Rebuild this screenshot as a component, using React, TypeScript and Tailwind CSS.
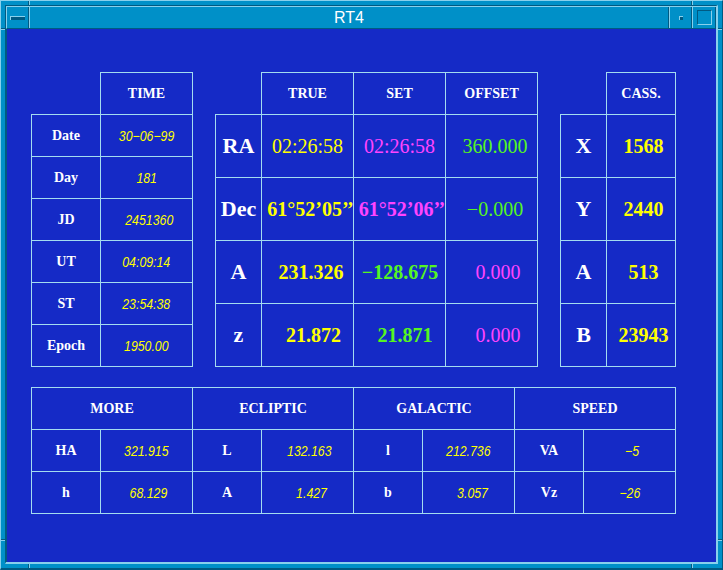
import React from "react";

const GRID = "border border-[#a4dcf0]";
const SERIF = "font-['Liberation_Serif',serif]";
const HDR = `${SERIF} font-bold text-[14px] text-white leading-none`;
const ITAL = "font-['Liberation_Sans',sans-serif] italic text-[14px] text-[#ffff00] leading-none";
const CENTER = "flex items-center justify-center whitespace-nowrap shrink-0";

const YEL = "text-[#ffff00]";
const MAG = "text-[#ff44ff]";
const GRN = "text-[#55f522]";

type V = { t: string; c: string; b?: boolean; s?: string };

const timeRows: [string, string, string][] = [
  ["Date", "30−06−99", ""],
  ["Day", "181", ""],
  ["JD", "2451360", "pl-[5px]"],
  ["UT", "04:09:14", ""],
  ["ST", "23:54:38", ""],
  ["Epoch", "1950.00", ""],
];

const posRows: [string, V[]][] = [
  [
    "RA",
    [
      { t: "02:26:58", c: YEL },
      { t: "02:26:58", c: MAG },
      { t: "360.000", c: GRN, s: "pl-[7px]" },
    ],
  ],
  [
    "Dec",
    [
      { t: "61°52’05’’", c: YEL, b: true, s: "pl-[6px]" },
      { t: "61°52’06’’", c: MAG, b: true, s: "pl-[5px]" },
      { t: "−0.000", c: GRN, s: "pl-[7px]" },
    ],
  ],
  [
    "A",
    [
      { t: "231.326", c: YEL, b: true, s: "pl-[7px]" },
      { t: "−128.675", c: GRN, b: true, s: "pl-[1px]" },
      { t: "0.000", c: MAG, s: "pl-[13px]" },
    ],
  ],
  [
    "z",
    [
      { t: "21.872", c: YEL, b: true, s: "pl-[12px]" },
      { t: "21.871", c: GRN, b: true, s: "pl-[11px]" },
      { t: "0.000", c: MAG, s: "pl-[13px]" },
    ],
  ],
];

const cassRows: [string, string][] = [
  ["X", "1568"],
  ["Y", "2440"],
  ["A", "513"],
  ["B", "23943"],
];

const moreHeaders = ["MORE", "ECLIPTIC", "GALACTIC", "SPEED"];
const moreRows: [string, string, string][][] = [
  [
    ["HA", "321.915", ""],
    ["L", "132.163", "pl-[3px]"],
    ["l", "212.736", ""],
    ["VA", "−5", "pl-[5px]"],
  ],
  [
    ["h", "68.129", "pl-[4px]"],
    ["A", "1.427", "pl-[9px]"],
    ["b", "3.057", "pl-[9px]"],
    ["Vz", "−26", ""],
  ],
];

function Ital({ t }: { t: string }) {
  return <span className="inline-block scale-x-[0.88]">{t}</span>;
}

function TimeTable() {
  return (
    <div className="flex flex-col">
      <div className="flex">
        <div className="w-[69px] shrink-0" />
        <div className={`w-[93px] h-[43px] ${GRID} ${CENTER} ${HDR}`}>TIME</div>
      </div>
      {timeRows.map(([l, v, s]) => (
        <div key={l} className="flex -mt-px">
          <div className={`w-[70px] h-[43px] ${GRID} ${CENTER} ${HDR}`}>{l}</div>
          <div className={`w-[93px] h-[43px] -ml-px ${GRID} ${CENTER} ${ITAL} ${s}`}>
            <Ital t={v} />
          </div>
        </div>
      ))}
    </div>
  );
}

function PosTable() {
  return (
    <div className="flex flex-col">
      <div className="flex">
        <div className="w-[46px] shrink-0" />
        {["TRUE", "SET", "OFFSET"].map((h, i) => (
          <div
            key={h}
            className={`w-[93px] h-[43px] ${i > 0 ? "-ml-px" : ""} ${GRID} ${CENTER} ${HDR}`}
          >
            {h}
          </div>
        ))}
      </div>
      {posRows.map(([l, vals]) => (
        <div key={l} className="flex -mt-px">
          <div
            className={`w-[47px] h-[64px] ${GRID} ${CENTER} ${SERIF} font-bold text-[22px] text-white leading-none`}
          >
            {l}
          </div>
          {vals.map((v, i) => (
            <div
              key={i}
              className={`w-[93px] h-[64px] -ml-px ${GRID} ${CENTER} ${SERIF} text-[20px] leading-none ${v.c} ${
                v.b ? "font-bold" : "font-normal"
              } ${v.s ?? ""}`}
            >
              {v.t}
            </div>
          ))}
        </div>
      ))}
    </div>
  );
}

function CassTable() {
  return (
    <div className="flex flex-col">
      <div className="flex">
        <div className="w-[46px] shrink-0" />
        <div className={`w-[70px] h-[43px] ${GRID} ${CENTER} ${HDR}`}>CASS.</div>
      </div>
      {cassRows.map(([l, v]) => (
        <div key={l} className="flex -mt-px">
          <div
            className={`w-[47px] h-[64px] ${GRID} ${CENTER} ${SERIF} font-bold text-[22px] text-white leading-none`}
          >
            {l}
          </div>
          <div
            className={`w-[70px] h-[64px] -ml-px ${GRID} ${CENTER} ${SERIF} font-bold text-[20px] leading-none ${YEL} pl-[5px]`}
          >
            {v}
          </div>
        </div>
      ))}
    </div>
  );
}

function MoreTable() {
  return (
    <div className="flex flex-col mt-[20px]">
      <div className="flex">
        {moreHeaders.map((h, i) => (
          <div
            key={h}
            className={`w-[162px] h-[43px] ${i > 0 ? "-ml-px" : ""} ${GRID} ${CENTER} ${HDR}`}
          >
            {h}
          </div>
        ))}
      </div>
      {moreRows.map((row, r) => (
        <div key={r} className="flex -mt-px">
          {row.map(([l, v, s], i) => (
            <React.Fragment key={i}>
              <div
                className={`w-[70px] h-[43px] ${i > 0 ? "-ml-px" : ""} ${GRID} ${CENTER} ${HDR}`}
              >
                {l}
              </div>
              <div className={`w-[93px] h-[43px] -ml-px ${GRID} ${CENTER} ${ITAL} ${s}`}>
                <Ital t={v} />
              </div>
            </React.Fragment>
          ))}
        </div>
      ))}
    </div>
  );
}

function Mark({ className }: { className: string }) {
  return <div className={`absolute ${className}`} />;
}

export default function App() {
  return (
    <div className="relative w-[723px] h-[570px] bg-[#0090c8] border-t border-l border-[#88d0ec] border-r border-b-2 border-r-[#005a82] border-b-[#005a82] p-[4px] overflow-hidden">
      {/* frame resize marks */}
      <Mark className="left-[27px] top-0 h-[4px] w-[2px] border-l border-[#005a82] bg-[#88d0ec]" />
      <Mark className="left-[690px] top-0 h-[4px] w-[2px] border-l border-[#005a82] bg-[#88d0ec]" />
      <Mark className="left-[27px] bottom-0 h-[4px] w-[2px] border-l border-[#005a82] bg-[#88d0ec]" />
      <Mark className="left-[690px] bottom-0 h-[4px] w-[2px] border-l border-[#005a82] bg-[#88d0ec]" />
      <Mark className="top-[27px] left-0 w-[4px] h-[2px] border-t border-[#005a82] bg-[#88d0ec]" />
      <Mark className="top-[27px] right-0 w-[4px] h-[2px] border-t border-[#005a82] bg-[#88d0ec]" />
      <Mark className="top-[538px] left-0 w-[4px] h-[2px] border-t border-[#005a82] bg-[#88d0ec]" />
      <Mark className="top-[538px] right-0 w-[4px] h-[2px] border-t border-[#005a82] bg-[#88d0ec]" />

      <div className="flex flex-col w-full h-full border-t border-l border-[#005a82] border-r-2 border-b-2 border-r-[#88d0ec] border-b-[#88d0ec]">
        {/* title bar */}
        <div className="flex h-[23px] shrink-0 bg-[#0090c8] border-t border-l border-[#88d0ec] border-b border-b-[#005a82]">
          <div className="w-[22px] shrink-0 flex items-center justify-center border-r border-[#005a82]">
            <div className="w-[15px] h-[4px] bg-[#005a82] border-t border-l border-[#88d0ec]" />
          </div>
          <div className="flex-1 flex items-center justify-center border-l border-[#88d0ec] border-r border-r-[#005a82] font-['Liberation_Sans',sans-serif] text-[16px] text-white leading-none">
            RT4
          </div>
          <div className="w-[23px] shrink-0 flex items-center justify-center border-l border-[#88d0ec] border-r border-r-[#005a82]">
            <div className="w-[4px] h-[4px] bg-[#005a82] border-t border-l border-[#88d0ec]" />
          </div>
          <div className="w-[24px] shrink-0 flex items-center justify-center border-l border-[#88d0ec] border-r border-r-[#005a82]">
            <div className="w-[15px] h-[15px] border-t border-l border-[#005a82] border-b border-r border-b-[#88d0ec] border-r-[#88d0ec]" />
          </div>
        </div>

        {/* content */}
        <div className="flex-1 bg-[#152ac6] border-l border-[#005a82] pl-[24px] pt-[43px]">
          <div className="flex gap-[22px]">
            <TimeTable />
            <PosTable />
            <CassTable />
          </div>
          <MoreTable />
        </div>
      </div>
    </div>
  );
}
